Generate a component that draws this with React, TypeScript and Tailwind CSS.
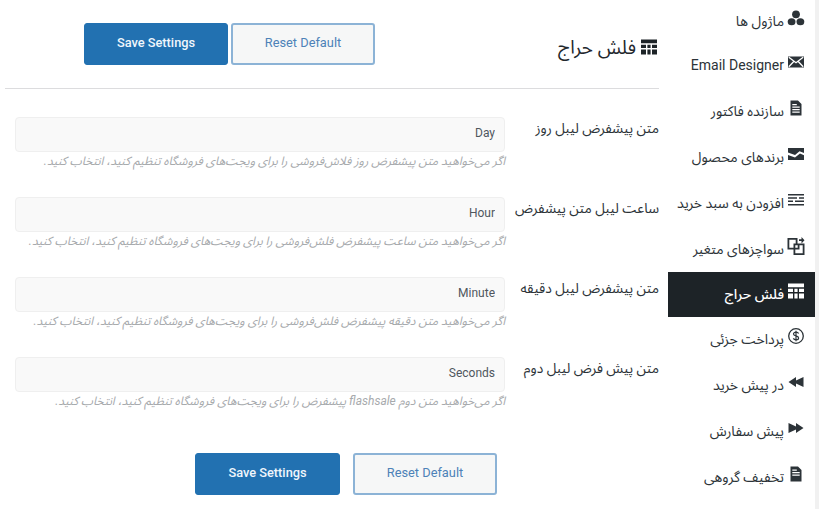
import React from "react";

const F = "[font-family:Roboto,'Noto_Sans_Arabic','Noto_Sans','Liberation_Sans','DejaVu_Sans',sans-serif]";

const S = ({ children }: { children: React.ReactNode }) => (
  <svg viewBox="0 0 20 20" className="w-[20px] h-[20px] shrink-0" fill="currentColor">{children}</svg>
);
const Modules = () => <S><circle cx="10" cy="6.300" r="3.900" /><ellipse cx="5.600" cy="13.700" rx="3.900" ry="3.500" /><ellipse cx="14.400" cy="13.700" rx="3.900" ry="3.500" /></S>;
const Email = () => <S><rect x="2" y="4.500" width="16" height="11" /><path d="M2.800 5.200 10 10.800l7.200-5.600M2.800 14.800 8 9.300M17.200 14.800 12 9.300" fill="none" stroke="white" strokeWidth="1.300" /></S>;
const Doc = () => <S><path d="M4.500 2.500h7.500l3.500 3.500v11.500h-11z M6.300 6v1.200h4.500V6z M6.300 8.500v1.200h7.400V8.500z M6.300 11v1.200h7.400V11z M6.300 13.500v1.200h7.400v-1.200z" fillRule="evenodd" /></S>;
const DocDark = () => <S><path d="M4.500 2.500h7.500l3.500 3.500v11.500h-11z M6.300 5.500v1.200h4.500V5.500z M6.300 8v1.200h7.400V8z M6.300 10.500v1.200h7.400v-1.200z" fillRule="evenodd" /></S>;
const Brands = () => <S><path d="M2 4h16v5l-4.500-1.800L9 11 2 8.500z M2 11l7 2.600 5-4 4 1.600V16H2z" /></S>;
const Lines = () => <S><path d="M2 4h16v1.500H2z M2 7.300h9v1.500H2z M13 7.300h5v1.500h-5z M2 10.600h5v1.500H2z M9 10.600h9v1.500H9z M2 14h16v1.500H2z" /></S>;
const Swatch = () => <S><path d="M1.500 2h10v5.500h7V19h-11v-5.500h-6z M3.300 3.800v8H7.500V7.500h2.200V3.800z M9.300 9.300v2.500h2.400V9.300z M9.300 13.500v3.700h7.400V9.300h-3.200V13.500z" fillRule="evenodd" /><path d="M13 3.200h2.500V1l3 3.200-3 3.200V5H13z" /></S>;
const Grid = () => <S><path d="M2 2.500h16v3.700H2z M2 7.800h5v3.200H2z M8.400 7.800h3.200v3.200H8.400z M13 7.800h5v3.200h-5z M2 12.500h5v5H2z M8.400 12.500h3.200v5H8.400z M13 12.500h5v5h-5z" /></S>;
const Dollar = () => (
  <svg viewBox="0 0 20 20" className="w-[20px] h-[20px] shrink-0">
    <circle cx="10" cy="10" r="7.300" fill="none" stroke="currentColor" strokeWidth="1.300" />
    <path d="M12.600 7.600C12.200 6.700 11.200 6.200 10 6.200c-1.400 0-2.500.7-2.500 1.800 0 2.500 5.100 1.300 5.100 3.900 0 1.200-1.200 1.900-2.600 1.900-1.200 0-2.200-.5-2.700-1.400M10 4.800v10.400" fill="none" stroke="currentColor" strokeWidth="1.200" />
  </svg>
);
const Back = () => <S><path d="M2.500 10 10 5v3.500L17.500 5v10L10 11.500V15z" /></S>;
const Forward = () => <S><path d="M17.500 10 10 5v3.500L2.500 5v10l7.500-3.500V15z" /></S>;

const menu: { t: string; i: React.ReactNode; h: string; active?: boolean }[] = [
  { t: "ماژول ها", i: <Modules />, h: "h-[43px]" },
  { t: "Email Designer", i: <Email />, h: "h-[45.8px]" },
  { t: "سازنده فاکتور", i: <Doc />, h: "h-[45.8px]" },
  { t: "برندهای محصول", i: <Brands />, h: "h-[45.8px]" },
  { t: "افزودن به سبد خرید", i: <Lines />, h: "h-[45.8px]" },
  { t: "سواچزهای متغیر", i: <Swatch />, h: "h-[45.8px]" },
  { t: "فلش حراج", i: <Grid />, h: "h-[45px]", active: true },
  { t: "پرداخت جزئی", i: <Dollar />, h: "h-[45.8px]" },
  { t: "در پیش خرید", i: <Back />, h: "h-[45.8px]" },
  { t: "پیش سفارش", i: <Forward />, h: "h-[45.8px]" },
  { t: "تخفیف گروهی", i: <DocDark />, h: "h-[45.8px]" },
];

const rows = [
  { l: "متن پیشفرض لیبل روز", v: "Day", h: "اگر می‌خواهید متن پیشفرض روز فلاش‌فروشی را برای ویجت‌های فروشگاه تنظیم کنید، انتخاب کنید." },
  { l: "ساعت لیبل متن پیشفرض", v: "Hour", h: "اگر می‌خواهید متن ساعت پیشفرض فلش‌فروشی را برای ویجت‌های فروشگاه تنظیم کنید، انتخاب کنید." },
  { l: "متن پیشفرض لیبل دقیقه", v: "Minute", h: "اگر می‌خواهید متن دقیقه پیشفرض فلش‌فروشی را برای ویجت‌های فروشگاه تنظیم کنید، انتخاب کنید." },
  { l: "متن پیش فرض لیبل دوم", v: "Seconds", h: "اگر می‌خواهید متن دوم flashsale پیشفرض را برای ویجت‌های فروشگاه تنظیم کنید، انتخاب کنید." },
];

const Save = ({ w }: { w: string }) => (
  <button className={`${w} h-[42px] pb-[3px] rounded-[3px] bg-[#2271b1] border border-[#2271b1] text-[#f0f6fc] text-[12.8px] font-medium`}>Save Settings</button>
);
const Reset = ({ w }: { w: string }) => (
  <button className={`${w} h-[42px] pb-[3px] rounded-[3px] bg-[#f6f7f7] border-2 border-[#8cb3d6] text-[#4d82b8] text-[12.8px]`}>Reset Default</button>
);

export default function App() {
  return (
    <div dir="rtl" className={`${F} w-[819px] h-[509px] overflow-hidden bg-white flex text-[#2c3338]`}>
      <div className="w-[4px] bg-[#f1f1f1] shrink-0" />
      <nav className="w-[147px] shrink-0 flex flex-col">
        {menu.map((m) => (
          <div key={m.t} className={`${m.h} flex items-center gap-[2px] pr-[9px] text-[14px] ${m.active ? "bg-[#1d2327] text-white font-medium" : "text-[#2c3338]"}`}>
            <span className="mb-[7px]">{m.i}</span>
            <span className="whitespace-nowrap">{m.t}</span>
          </div>
        ))}
      </nav>
      <main className="w-[654px] mr-[9px] flex flex-col">
        <header className="h-[89px] border-b border-[#dcdcde] flex items-start justify-between">
          <h2 className="mt-[35px] flex items-center gap-[3px] text-[19px] leading-[26px] font-normal text-[#23282d]">
            <span className="text-[#1d2327] -mt-[2px]"><Grid /></span>
            فلش حراج
          </h2>
          <div className="mt-[23px] ml-[79px] flex flex-row-reverse gap-[3px]">
            <Save w="w-[144px]" />
            <Reset w="w-[144px]" />
          </div>
        </header>
        <div className="pt-[28px] flex flex-col gap-[14px]">
          {rows.map((r) => (
            <div key={r.v} className="flex h-[66px]">
              <label className="w-[154px] shrink-0 pt-[1px] text-[13.8px] leading-[20px] text-[#2c3338] whitespace-nowrap">{r.l}</label>
              <div className="w-[490px]">
                <input readOnly value={r.v} dir="rtl" className="w-full h-[35px] pb-[4px] rounded-[4px] border border-[#efefef] bg-[#f9f9f9] px-[9px] text-[12px] text-[#50575e] outline-none" />
                <p className="text-[12px] italic leading-[18px] text-[#a7aaad] whitespace-nowrap">{r.h}</p>
              </div>
            </div>
          ))}
        </div>
        <footer className="mt-[30px] flex flex-row-reverse justify-end gap-[13px] pr-[162px]">
          <Save w="w-[145px]" />
          <Reset w="w-[144px]" />
        </footer>
      </main>
    </div>
  );
}
